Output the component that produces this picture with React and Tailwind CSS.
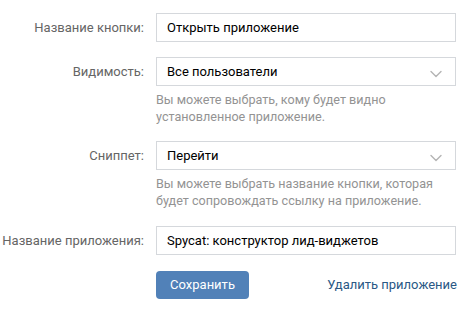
import React, { useState } from "react";

const Chevron = () => (
  <svg width="12" height="8" viewBox="0 0 12 8" className="absolute right-[13px] top-[12px]">
    <path d="M1 1.5 L6 6.5 L11 1.5" fill="none" stroke="#b4b4b4" strokeWidth="1.4" strokeLinecap="round" strokeLinejoin="round" />
  </svg>
);

const Row = ({ label, children, className = "" }) => (
  <div className={`flex items-start ${className}`}>
    <div className="w-[144px] shrink-0 text-right text-[13px] leading-[29px] text-[#656565]">{label}</div>
    <div className="ml-[12px] w-[300px]">{children}</div>
  </div>
);

const Field = ({ value, select }) => (
  <div className="relative h-[29px] w-full border border-[#d5d8dc] bg-white pl-[10px] text-[13px] leading-[27px] text-black">
    {value}
    {select && <Chevron />}
  </div>
);

const Hint = ({ children }) => (
  <p className="mt-[5px] text-[12.6px] leading-[17px] text-[#939393]">{children}</p>
);

export default function App() {
  const [saved, setSaved] = useState(false);

  return (
    <div className="h-[311px] w-[474px] bg-white pt-[13px]" style={{ fontFamily: "Roboto, 'Open Sans', sans-serif" }}>
      <Row label="Название кнопки:">
        <Field value="Открыть приложение" />
      </Row>

      <Row label="Видимость:" className="mt-[15px]">
        <Field value="Все пользователи" select />
        <Hint>
          Вы можете выбрать, кому будет видно
          <br />
          установленное приложение.
        </Hint>
      </Row>

      <Row label="Сниппет:" className="mt-[16px]">
        <Field value="Перейти" select />
        <Hint>
          Вы можете выбрать название кнопки, которая
          <br />
          будет сопровождать ссылку на приложение.
        </Hint>
      </Row>

      <Row label="Название приложения:" className="mt-[17px]">
        <Field value="Spycat: конструктор лид-виджетов" />
      </Row>

      <div className="ml-[156px] mt-[16px] flex w-[301px] items-center justify-between">
        <button
          onClick={() => setSaved(!saved)}
          className="h-[28px] w-[93px] rounded-[4px] bg-[#5181b8] text-[13px] text-white"
        >
          Сохранить
        </button>
        <a href="#" className="text-[13px] text-[#2a5885]">
          Удалить приложение
        </a>
      </div>
    </div>
  );
}
